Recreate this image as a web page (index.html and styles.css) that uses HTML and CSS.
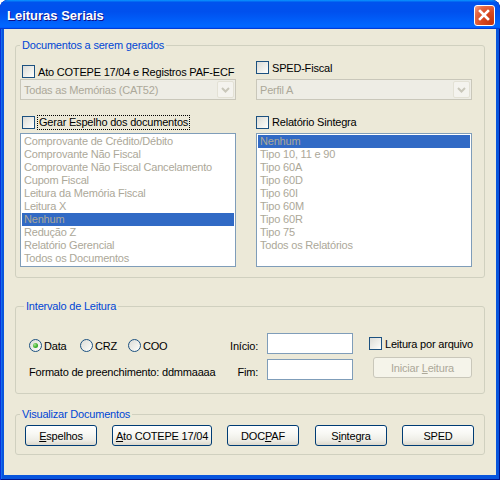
FILE: index.html
```html
<!DOCTYPE html>
<html lang="pt">
<head>
<meta charset="utf-8">
<title>Leituras Seriais</title>
<link rel="stylesheet" href="styles.css">
</head>
<body>
<div class="window">
  <div class="titlebar">
    <span class="title">Leituras Seriais</span>
    <button class="close" aria-label="Fechar">
      <svg width="19" height="19" viewBox="0 0 19 19"><path d="M5 5 L13 13 M13 5 L5 13" stroke="#fff" stroke-width="2.6" stroke-linecap="square" fill="none"/></svg>
    </button>
  </div>
  <div class="client">
    <fieldset class="group g-docs">
      <legend>Documentos a serem gerados</legend>
      <div class="docs">
        <div class="col">
          <div class="chkrow first-l"><label class="chk"><span class="box"></span><span>Ato COTEPE 17/04 e Registros PAF-ECF</span></label></div>
          <div class="combo"><span class="combo-text">Todas as Memórias (CAT52)</span><span class="combo-btn"><svg width="15" height="17" viewBox="0 0 15 17"><path d="M4 7 L7.5 10.5 L11 7" stroke="#C9C7BA" stroke-width="2" fill="none"/></svg></span></div>
          <div class="chkrow second second-l"><label class="chk"><span class="box"></span><span class="focus">Gerar Espelho dos documentos</span></label></div>
          <ul class="listbox">
            <li>Comprovante de Crédito/Débito</li>
            <li>Comprovante Não Fiscal</li>
            <li>Comprovante Não Fiscal Cancelamento</li>
            <li>Cupom Fiscal</li>
            <li>Leitura da Memória Fiscal</li>
            <li>Leitura X</li>
            <li class="sel">Nenhum</li>
            <li>Redução Z</li>
            <li>Relatório Gerencial</li>
            <li>Todos os Documentos</li>
          </ul>
        </div>
        <div class="col">
          <div class="chkrow first-r"><label class="chk"><span class="box"></span><span>SPED-Fiscal</span></label></div>
          <div class="combo"><span class="combo-text">Perfil A</span><span class="combo-btn"><svg width="15" height="17" viewBox="0 0 15 17"><path d="M4 7 L7.5 10.5 L11 7" stroke="#C9C7BA" stroke-width="2" fill="none"/></svg></span></div>
          <div class="chkrow second"><label class="chk"><span class="box"></span><span class="plain">Relatório Sintegra</span></label></div>
          <ul class="listbox">
            <li class="sel">Nenhum</li>
            <li>Tipo 10, 11 e 90</li>
            <li>Tipo 60A</li>
            <li>Tipo 60D</li>
            <li>Tipo 60I</li>
            <li>Tipo 60M</li>
            <li>Tipo 60R</li>
            <li>Tipo 75</li>
            <li>Todos os Relatórios</li>
          </ul>
        </div>
      </div>
    </fieldset>

    <fieldset class="group g-int">
      <legend>Intervalo de Leitura</legend>
      <div class="interval">
        <div class="radios">
          <label class="radio-opt opt-data"><span class="radio on"><span class="dot"></span></span><span>Data</span></label>
          <label class="radio-opt opt-crz"><span class="radio"></span><span>CRZ</span></label>
          <label class="radio-opt"><span class="radio"></span><span>COO</span></label>
        </div>
        <div class="flabel">Início:</div>
        <input class="field" type="text">
        <div class="opt-cell"><label class="chk"><span class="box"></span><span>Leitura por arquivo</span></label></div>
        <div class="format">Formato de preenchimento: ddmmaaaa</div>
        <div class="flabel">Fim:</div>
        <input class="field" type="text">
        <div class="btn-cell"><button class="btn btn-disabled" disabled>Iniciar <u>L</u>eitura</button></div>
      </div>
    </fieldset>

    <fieldset class="group g-vis">
      <legend>Visualizar Documentos</legend>
      <div class="actions">
        <button class="btn w72"><u>E</u>spelhos</button>
        <button class="btn w100"><u>A</u>to COTEPE 17/04</button>
        <button class="btn w72">DOC<u>P</u>AF</button>
        <button class="btn w72 gap16">S<u>i</u>ntegra</button>
        <button class="btn w72">SPED</button>
      </div>
    </fieldset>
  </div>
</div>
</body>
</html>
```

FILE: styles.css
```css
* { box-sizing: border-box; }
html, body { margin: 0; padding: 0; background: #ffffff; }
body {
  font-family: "Liberation Sans", Arial, sans-serif;
  font-size: 11px;
  letter-spacing: -0.2px;
  color: #000;
}

.window {
  width: 500px;
  height: 480px;
  display: flex;
  flex-direction: column;
  background: #0855DD;
  border-radius: 8px 8px 0 0;
  overflow: hidden;
  box-shadow: inset 1px 0 #0831D9, inset -1px 0 #00138C, inset 0 -1px #00138C, inset 2px 0 #166AEE;
}

.titlebar {
  height: 29px;
  flex: none;
  display: flex;
  align-items: flex-start;
  justify-content: space-between;
  padding: 0 5px 0 7px;
  background: linear-gradient(180deg, #0997ff, #0053ee 8%, #0050ee 40%, #0066ff 88%, #0066ff 93%, #005bff 95%, #003dd7 96%, #003dd7);
  border-radius: 8px 8px 0 0;
}

.title {
  color: #fff;
  font-weight: bold;
  font-size: 13px;
  line-height: 16px;
  letter-spacing: 0;
  margin-top: 8px;
  text-shadow: 1px 1px #0F1089;
}

.close {
  margin-top: 5px;
  width: 21px;
  height: 21px;
  padding: 0;
  border: 1px solid #fff;
  border-radius: 3px;
  background: radial-gradient(circle at 85% 85%, #C4350F 0%, #DA4A22 45%, #E66B47 75%, #F4A68E 100%);
  display: flex;
  align-items: center;
  justify-content: center;
}
.close svg { display: block; }

.client {
  flex: 1;
  margin: 0 4px 5px;
  background: #ECE9D8;
  padding: 9px 11px 0;
}

.group {
  margin: 0;
  padding: 0;
  min-width: 0;
  width: 470px;
  border: 1px solid #D0D0BF;
  border-radius: 3px;
}
.group legend {
  color: #0046D5;
  padding: 0 2px;
  line-height: 14px;
  margin-left: 4px;
}
.g-int { margin-top: 21px; }
.g-int legend { margin-left: 8px; }
.g-vis { margin-top: 13px; }

/* Documentos */
.docs {
  display: grid;
  grid-template-columns: 216px 216px;
  column-gap: 20px;
  padding: 8px 11px 10px 4px;
}
.col { display: flex; flex-direction: column; }

.chkrow { height: 19px; display: flex; align-items: flex-start; }
.first-l { padding: 5px 0 0 2px; }
.first-r { padding: 1px 0 0 0; }
.second { margin-top: 14px; padding-top: 1px; }
.second-l { padding-left: 2px; }

.chk { display: flex; align-items: center; gap: 3px; white-space: nowrap; }
.box {
  width: 13px;
  height: 13px;
  flex: none;
  border: 1px solid #1C5180;
  background: linear-gradient(135deg, #DCDCD7 0%, #F4F4F0 70%, #FFFFFF 100%);
}
.focus { border: 1px dotted #000; line-height: 13px; padding: 0 1px; margin-left: -1px; }
.plain { border: 1px solid transparent; line-height: 13px; margin-left: -1px; }

.combo {
  height: 21px;
  display: flex;
  align-items: center;
  justify-content: space-between;
  border: 1px solid #C9C7BA;
  background: #EEEDE5;
  padding: 0 1px 0 3px;
  color: #ACA899;
}
.combo-btn {
  width: 17px;
  height: 17px;
  border: 1px solid #E3E1D5;
  border-radius: 2px;
  background: #F4F3EE;
  display: flex;
  align-items: center;
  justify-content: center;
}
.combo-btn svg { display: block; }

.listbox {
  margin: 0;
  padding: 1px;
  list-style: none;
  height: 134px;
  border: 1px solid #7F9DB9;
  background: #fff;
}
.listbox li {
  line-height: 13px;
  padding-left: 2px;
  color: #ACA899;
  white-space: nowrap;
}
.listbox li.sel { background: #316AC5; }

/* Intervalo */
.interval {
  display: grid;
  grid-template-columns: 196px 42px 86px 122px;
  grid-template-rows: 21px 21px;
  row-gap: 5px;
  padding: 20px 0 13px 13px;
}
.radios { display: flex; align-items: center; padding-top: 4px; }
.radio-opt { display: flex; align-items: center; gap: 2px; }
.opt-data { width: 51px; }
.opt-crz { width: 48px; }
.radio {
  width: 13px;
  height: 13px;
  flex: none;
  border: 1px solid #1C5180;
  border-radius: 50%;
  background: linear-gradient(135deg, #DCDCD7 0%, #F4F4F0 70%, #FFFFFF 100%);
  display: flex;
  align-items: center;
  justify-content: center;
}
.dot {
  width: 5px;
  height: 5px;
  border-radius: 50%;
  background: radial-gradient(circle at 35% 35%, #A8E39A 0%, #3FB02A 55%, #21A121 100%);
}
.flabel {
  display: flex;
  align-items: center;
  justify-content: flex-end;
  padding: 4px 9px 0 0;
}
.format { display: flex; align-items: center; padding-top: 4px; white-space: nowrap; }
.field {
  width: 86px;
  height: 21px;
  margin: 0;
  border: 1px solid #7F9DB9;
  background: #fff;
  font: inherit;
}
.opt-cell { display: flex; align-items: center; padding-left: 16px; }
.btn-cell { padding-left: 20px; }

.btn {
  height: 21px;
  padding: 0;
  font: inherit;
  letter-spacing: -0.2px;
  color: #000;
  border: 1px solid #003C74;
  border-radius: 3px;
  background: linear-gradient(180deg, #FFFFFF 0%, #F8F8F4 40%, #EEEDE6 75%, #DCD8CC 100%);
}
.btn-disabled {
  width: 99px;
  margin-top: -2px;
  color: #ACA899;
  border-color: #C9C7BA;
  background: #F5F4EA;
}

/* Visualizar */
.actions {
  display: flex;
  gap: 15px;
  padding: 4px 0 8px 9px;
}
.w72 { width: 72px; }
.w100 { width: 100px; }
.gap16 { margin-left: 1px; }
```
